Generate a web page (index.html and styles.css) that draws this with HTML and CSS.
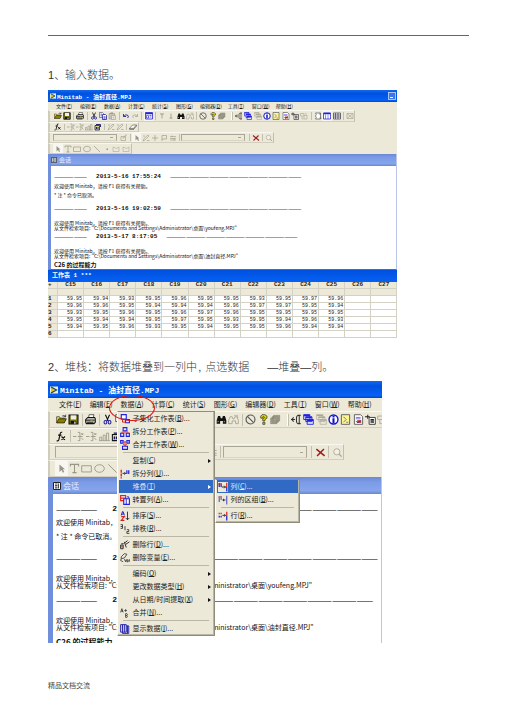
FILE: index.html
```html
<!DOCTYPE html>
<html lang="zh-CN">
<head>
<meta charset="utf-8">
<meta name="viewport" content="width=device-width, initial-scale=1">
<title>Minitab 数据堆叠</title>
<link rel="stylesheet" href="styles.css">
</head>
<body>
<svg class="sprite" aria-hidden="true">
  <symbol id="app" viewBox="0 0 16 16"><path d="M0 1h16v14H0z" fill="#e9f0c8"/><path d="M2 2l8 6-8 6z" fill="#f2c500"/><path d="M2 2l11 6-11 6" fill="none" stroke="#173a6b" stroke-width="2.4"/></symbol>
  <symbol id="log" viewBox="0 0 16 16"><path d="M1 1h14v14H1z" fill="#fff" stroke="#222" stroke-width="2"/><path d="M4 4h5M4 7h5M4 10h5M4 12h5M11 3v10" stroke="#222" stroke-width="1.6"/></symbol>
  <symbol id="open" viewBox="0 0 16 16"><path d="M1 13V4h4l1 2h6v2" fill="#ffe650" stroke="#222"/><path d="M1 13l3-6h11l-3 6z" fill="#8a8000" stroke="#111"/><path d="M9 3q3-2 5 1m0-3v3h-3" fill="none" stroke="#111"/></symbol>
  <symbol id="save" viewBox="0 0 16 16"><path d="M1.500 1.500h13v13h-13z" fill="#77760c" stroke="#111" stroke-width="1.600"/><path d="M4 2h8v6H4z" fill="#eee"/><path d="M4 10h8v4H4z" fill="#111"/><path d="M9 11h2v3H9z" fill="#ddd"/></symbol>
  <symbol id="print" viewBox="0 0 16 16"><path d="M5 6l1-5h7l-1 5" fill="#fff" stroke="#222"/><path d="M1 8l3-3h10l1 2v5l-2 2H2l-1-2z" fill="#bbb" stroke="#111" stroke-width="1.500"/><path d="M1 9h13M3 12h9" stroke="#111" stroke-width="1.300"/><path d="M8 10h3" stroke="#dc0" stroke-width="1.300"/></symbol>
  <symbol id="cut" viewBox="0 0 16 16"><path d="M5 1l4 9M11 1L7 10" stroke="#111" stroke-width="1.600"/><ellipse cx="5" cy="12" rx="2" ry="2.500" fill="none" stroke="#22a" stroke-width="1.600"/><ellipse cx="11" cy="12" rx="2" ry="2.500" fill="none" stroke="#22a" stroke-width="1.600"/></symbol>
  <symbol id="copy" viewBox="0 0 16 16"><path d="M1 1h6l2 2v8H1z" fill="#fff" stroke="#222"/><path d="M7 5h6l2 2v8H7z" fill="#fff" stroke="#119" stroke-width="1.500"/><path d="M3 4h3M3 6h3M3 8h3M9 9h4M9 11h4M9 13h4" stroke="#119"/></symbol>
  <symbol id="paste" viewBox="0 0 16 16"><path d="M2 3h11v11H2z" fill="#c9c6b4" stroke="#8e8b7b"/><path d="M5 1h5v3H5z" fill="#9a9787"/><path d="M7 7h8v8H7z" fill="#f4f2e8" stroke="#8e8b7b"/><path d="M9 10h4M9 12h4" stroke="#8e8b7b"/></symbol>
  <symbol id="undo" viewBox="0 0 16 16"><path d="M3 4v5h5M3 9q5-6 9-2 2 3-1 5" fill="none" stroke="#22a" stroke-width="1.800"/></symbol>
  <symbol id="redo" viewBox="0 0 16 16"><path d="M13 4v5H8M13 9Q8 3 4 7q-2 3 1 5" fill="none" stroke="#aaa797" stroke-width="1.600"/></symbol>
  <symbol id="dialog" viewBox="0 0 16 16"><path d="M1 1h14v13H1z" fill="#fff" stroke="#22c" stroke-width="1.600"/><path d="M1 3h14" stroke="#22c" stroke-width="3"/><path d="M3 7h4v5H3zM9 7h4M9 10h4" fill="none" stroke="#22c" stroke-width="1.300"/></symbol>
  <symbol id="up" viewBox="0 0 16 16"><path d="M8 3v10M4 4h8" stroke="#999687" stroke-width="1.600"/></symbol>
  <symbol id="down" viewBox="0 0 16 16"><path d="M8 3v10M5 12h6" stroke="#999687" stroke-width="1.600"/></symbol>
  <symbol id="find" viewBox="0 0 16 16"><path d="M3 3h3l1 3h2l1-3h3l2 6v5h-5v-4H6v4H1V9z" fill="#111"/><path d="M3 10v2M12 10v2" stroke="#eee"/></symbol>
  <symbol id="find2" viewBox="0 0 16 16"><path d="M3 4h3l1 3h2l1-3h3l2 5v5h-4v-4H6v4H1V9z" fill="none" stroke="#a8a595" stroke-width="1.300"/><path d="M9 2h5v4" fill="none" stroke="#a8a595"/></symbol>
  <symbol id="stop" viewBox="0 0 16 16"><circle cx="8" cy="8" r="6.500" fill="none" stroke="#555" stroke-width="1.600"/><path d="M3.500 3.500l9 9" stroke="#555" stroke-width="1.600"/></symbol>
  <symbol id="help" viewBox="0 0 16 16"><path d="M4 6V3l2-2h4l3 2v3l-3 2v2H7V7l3-2-1-1H7v2z" fill="#e8e000" stroke="#222"/><path d="M7 12h3v3H7z" fill="#e8e000" stroke="#222"/></symbol>
  <symbol id="cards" viewBox="0 0 16 16"><path d="M5 2h9v8H5zM3 4h9v8H3zM1 6h9v8H1z" fill="#aaa797" stroke="#838172"/></symbol>
  <symbol id="plug" viewBox="0 0 16 16"><path d="M0 8h6M4 5l-3 3 3 3M14 2h-4q-2 1-2 3v6q0 2 2 3h4M12 2v12" fill="none" stroke="#333" stroke-width="1.500"/></symbol>
  <symbol id="windows" viewBox="0 0 16 16"><path d="M1 1h9v7H1zM4 4h9v7H4zM6 8h9v7H6z" fill="#dfe3ff" stroke="#22d" stroke-width="1.300"/><path d="M1 2h9M4 5h9M6 9h9" stroke="#22d" stroke-width="2.200"/></symbol>
  <symbol id="windows2" viewBox="0 0 16 16"><path d="M1 1h9v7H1zM4 4h9v7H4zM6 8h9v7H6z" fill="#ece9d8" stroke="#aaa797"/><path d="M1 2h9M4 5h9M6 9h9" stroke="#aaa797" stroke-width="1.800"/></symbol>
  <symbol id="info" viewBox="0 0 16 16"><circle cx="8" cy="8" r="6.500" fill="#fff" stroke="#11c" stroke-width="2"/><path d="M8 3v2M8 6v7" stroke="#11c" stroke-width="3"/></symbol>
  <symbol id="note" viewBox="0 0 16 16"><path d="M2 1h12v14H2z" fill="#fdf790" stroke="#555" stroke-width="1.300"/><path d="M5 4l4 4-4 4M9 12h3" fill="none" stroke="#33a"/></symbol>
  <symbol id="report" viewBox="0 0 16 16"><path d="M2 1h9l3 3v11H2z" fill="#fff" stroke="#555" stroke-width="1.300"/><path d="M4 5h7M4 7h7" stroke="#44c"/><path d="M6 9h6v4H6z" fill="#c33"/><path d="M4 10l3 3 4-4" stroke="#228" fill="none"/></symbol>
  <symbol id="add" viewBox="0 0 16 16"><path d="M6 5h9v10H6z" fill="#fff" stroke="#333" stroke-width="1.300"/><path d="M0 4h7M4 1v6M8 8h5M8 10h5M8 12h5" stroke="#222" stroke-width="1.500"/></symbol>
  <symbol id="links" viewBox="0 0 16 16"><path d="M1 3h7v5H1zM8 7h6v7H8zM10 2l4 3M4 9v5h3" fill="none" stroke="#aaa797" stroke-width="1.300"/></symbol>
  <symbol id="scroll" viewBox="0 0 16 16"><path d="M3 2h10v12H3M3 2q3 3 0 6 3 3 0 6M10 4h3M11 12h4" fill="#fff" stroke="#555" stroke-width="1.400"/></symbol>
  <symbol id="sheet" viewBox="0 0 16 16"><path d="M1 2h14v12H1z" fill="#fff" stroke="#22d" stroke-width="1.500"/><path d="M1 3h14" stroke="#22d" stroke-width="3"/><path d="M5 5v9M10 5v9" stroke="#22d"/></symbol>
  <symbol id="grid" viewBox="0 0 16 16"><path d="M1 2h14v12H1zM1 6h14M1 10h14M5 2v12M10 2v12" fill="#fff" stroke="#445" stroke-width="1.500"/></symbol>
  <symbol id="net" viewBox="0 0 16 16"><path d="M2 3h12v10H2zM2 3l12 10M14 3L2 13" fill="none" stroke="#aaa797" stroke-width="1.400"/></symbol>
  <symbol id="fx" viewBox="0 0 16 16"><path d="M9 2Q6 1 6 5L4 13q-1 2-3 1M3 6h5M8 8l5 5M13 8l-5 5" fill="none" stroke="#111" stroke-width="1.700"/></symbol>
  <symbol id="node" viewBox="0 0 16 16"><path d="M0 8h5M7 2h3v12H7M12 3l3 3M15 3l-3 3M12 10l3 3M7 8h7" fill="none" stroke="#a09d8d" stroke-width="1.400"/></symbol>
  <symbol id="bars" viewBox="0 0 16 16"><path d="M1 14V9h3v5M6 14V6h3v8M11 14V3h3v11M0 14h16" fill="none" stroke="#a09d8d" stroke-width="1.300"/></symbol>
  <symbol id="robot" viewBox="0 0 16 16"><path d="M2 5h9v9H2z" fill="#dfd98a" stroke="#111" stroke-width="1.500"/><path d="M4 3h9v5M5 8v4M8 8v4" fill="none" stroke="#116" stroke-width="1.800"/></symbol>
  <symbol id="pen" viewBox="0 0 16 16"><path d="M2 14l2-5 8-7 2 2-8 8zM2 4h4M10 13h5" fill="none" stroke="#a09d8d" stroke-width="1.300"/></symbol>
  <symbol id="eraser" viewBox="0 0 16 16"><path d="M1 11l6-7h8l-6 7zM1 11v2h8l6-7V4M9 11v2" fill="#fff" stroke="#555" stroke-width="1.300"/></symbol>
  <symbol id="pointer" viewBox="0 0 16 16"><path d="M5 2v11l3-3 2 4 2-1-2-4h3z" fill="#999687"/></symbol>
  <symbol id="hand" viewBox="0 0 16 16"><path d="M2 5h9v8H2zM8 8l3-6h3M5 8h3" fill="none" stroke="#a09d8d" stroke-width="1.300"/></symbol>
  <symbol id="plus" viewBox="0 0 16 16"><path d="M8 2v12M2 8h12" stroke="#a09d8d" stroke-width="1.400"/></symbol>
  <symbol id="flag" viewBox="0 0 16 16"><path d="M4 14V3h9v7H4" fill="none" stroke="#a09d8d" stroke-width="1.400"/></symbol>
  <symbol id="lines" viewBox="0 0 16 16"><path d="M2 5h12M2 9h12M2 12h12M6 3v4M10 8v5" stroke="#a09d8d" stroke-width="1.300"/></symbol>
  <symbol id="cross" viewBox="0 0 16 16"><path d="M2 3l12 10M13 3L3 13" stroke="#9d1c1c" stroke-width="2.200"/></symbol>
  <symbol id="lens" viewBox="0 0 16 16"><circle cx="7" cy="7" r="4.500" fill="#f3f1e6" stroke="#aaa797" stroke-width="1.300"/><path d="M10 10l4 4" stroke="#aaa797" stroke-width="2"/></symbol>
  <symbol id="text" viewBox="0 0 16 16"><path d="M2 5V2h12v3M8 2v12M5 14h6" fill="none" stroke="#999687" stroke-width="1.500"/></symbol>
  <symbol id="rect" viewBox="0 0 16 16"><path d="M1 4h14v9H1z" fill="none" stroke="#999687" stroke-width="1.300"/></symbol>
  <symbol id="oval" viewBox="0 0 16 16"><ellipse cx="8" cy="8" rx="7" ry="5.500" fill="none" stroke="#999687" stroke-width="1.300"/></symbol>
  <symbol id="line" viewBox="0 0 16 16"><path d="M2 2l12 12" stroke="#999687" stroke-width="1.400"/></symbol>
  <symbol id="dot" viewBox="0 0 16 16"><path d="M7 7h3v3H7z" fill="#999687"/></symbol>
  <symbol id="poly" viewBox="0 0 16 16"><path d="M2 4v9h12V4l-5 3z" fill="none" stroke="#b0ad9d" stroke-width="1.300"/></symbol>
  <symbol id="m-subset" viewBox="0 0 16 16"><path d="M2 1h8v7H2z" fill="#fff" stroke="#22d" stroke-width="1.800"/><path d="M9 9h6v5H9z" fill="#fff" stroke="#22d" stroke-width="1.800"/><path d="M4 9v4h4" fill="none" stroke="#d22" stroke-width="1.600"/></symbol>
  <symbol id="m-split" viewBox="0 0 16 16"><path d="M5 1h6v5H5zM1 10h5v5H1zM10 10h5v5h-5z" fill="#dfe4ff" stroke="#22d" stroke-width="1.700"/><path d="M8 6v2M3 9V8h10v1" fill="none" stroke="#d22" stroke-width="1.500"/></symbol>
  <symbol id="m-merge" viewBox="0 0 16 16"><path d="M1 1h4v4H1zM11 1h4v4h-4zM4 10h8v5H4z" fill="#dfe4ff" stroke="#22d" stroke-width="1.700"/><path d="M6 3h4M8 3v6M5 7l3 2 3-2" fill="none" stroke="#d22" stroke-width="1.500"/></symbol>
  <symbol id="m-unstack" viewBox="0 0 16 16"><path d="M2 1v14" stroke="#d22" stroke-width="2.200" stroke-dasharray="5 1"/><path d="M4 7h5M7 5l2 2-2 2" fill="none" stroke="#222" stroke-width="1.400"/><path d="M11 2v6M14 2v6" stroke="#22d" stroke-width="2"/></symbol>
  <symbol id="m-transpose" viewBox="0 0 16 16"><path d="M1 1h8v8H1zM1 5h8" fill="#fff" stroke="#d22" stroke-width="1.800"/><path d="M6 6h9v9H6z" fill="#fff" stroke="#22d" stroke-width="1.800"/><path d="M10 6v9M11 3h3v2" fill="none" stroke="#22d" stroke-width="1.500"/></symbol>
  <symbol id="m-stack" viewBox="0 0 16 16"><path d="M2 2v6M5 2v6" stroke="#22d" stroke-width="2"/><path d="M6 8h6M10 6l2 2-2 2" fill="none" stroke="#222" stroke-width="1.500"/><path d="M1 3h3" stroke="#d22" stroke-width="3"/><path d="M14 1v7" stroke="#d22" stroke-width="2"/><path d="M14 8v7" stroke="#22d" stroke-width="2"/></symbol>
  <symbol id="m-blocks" viewBox="0 0 16 16"><path d="M2 2v9M5 2v6" stroke="#66b" stroke-width="2"/><path d="M7 8h5M9 6v4" stroke="#222" stroke-width="1.400"/><path d="M1 3h5" stroke="#c66" stroke-width="2"/><path d="M14 1v14" stroke="#55c" stroke-width="1.800"/></symbol>
  <symbol id="m-rows" viewBox="0 0 16 16"><path d="M1 4h5" stroke="#d22" stroke-width="2.500" stroke-dasharray="2 1"/><path d="M1 9h5" stroke="#22d" stroke-width="2.500" stroke-dasharray="2 1"/><path d="M7 7h5M10 5l2 2-2 2" fill="none" stroke="#222" stroke-width="1.400"/><path d="M14 1v7" stroke="#d22" stroke-width="2"/><path d="M14 8v7" stroke="#22d" stroke-width="2"/></symbol>
  <symbol id="m-sort" viewBox="0 0 16 16"><path d="M2 7l2-6h1l2 6M3 5h3" fill="none" stroke="#22c" stroke-width="1.600"/><path d="M2 9h5l-5 6h5" fill="none" stroke="#c22" stroke-width="1.700"/><path d="M12 1v13M9 11l3 3 3-3" fill="none" stroke="#222" stroke-width="1.400"/></symbol>
  <symbol id="m-rank" viewBox="0 0 16 16"><path d="M1 1h3v6H1M1 4h3M7 5l1-1v6M11 9h3v3h-3v3h4" fill="none" stroke="#333" stroke-width="1.400"/></symbol>
  <symbol id="m-delrow" viewBox="0 0 16 16"><path d="M1 8h4v6H1zM7 5l5-4M9 7l6-4M7 3l3 9M2 6h4" fill="none" stroke="#333" stroke-width="1.600"/><path d="M1 11h5" stroke="#944" stroke-width="1.500"/></symbol>
  <symbol id="m-erase" viewBox="0 0 16 16"><path d="M2 6l5-5 4 1-4 6-5 1zM2 9l-1 3 4 2M7 10l2 4 1-4M11 11h2v3h-2zM15 10v4" fill="none" stroke="#333" stroke-width="1.300"/></symbol>
  <symbol id="m-concat" viewBox="0 0 16 16"><path d="M1 7l2-6 2 6M2 5h3M7 4h4M9 2v4M9 9v6h2q2-1 0-3 2-2 0-3H9M9 12h2" fill="none" stroke="#333" stroke-width="1.300"/></symbol>
  <symbol id="m-show" viewBox="0 0 16 16"><path d="M1 1h9v12H1zM4 1v12M7 1v12M10 3h4v12H4v-2M12 3v12" fill="#dde" stroke="#22a" stroke-width="1.500"/></symbol>
</svg>

<main class="page">
  <hr class="rule">
  <h1 class="step"><span class="num">1</span>、输入数据。</h1>

  <section class="win small" aria-label="Minitab 主窗口">
    <header class="titlebar"><svg><use href="#app"/></svg><span>Minitab - 油封直径.MPJ</span><button class="min" aria-label="最小化"></button></header>
    <nav class="menubar">
      <div class="entry"><button>文件(<u>F</u>)</button></div><div class="entry"><button>编辑(<u>E</u>)</button></div><div class="entry"><button>数据(<u>A</u>)</button></div><div class="entry"><button>计算(<u>C</u>)</button></div><div class="entry"><button>统计(<u>S</u>)</button></div><div class="entry"><button>图形(<u>G</u>)</button></div><div class="entry"><button>编辑器(<u>D</u>)</button></div><div class="entry"><button>工具(<u>T</u>)</button></div><div class="entry"><button>窗口(<u>W</u>)</button></div><div class="entry"><button>帮助(<u>H</u>)</button></div>
    </nav>
    <div class="bar standard">
      <button aria-label="打开"><svg><use href="#open"/></svg></button><button aria-label="保存"><svg><use href="#save"/></svg></button><i></i><button aria-label="打印"><svg><use href="#print"/></svg></button><i></i><button aria-label="剪切"><svg><use href="#cut"/></svg></button><button aria-label="复制"><svg><use href="#copy"/></svg></button><button aria-label="粘贴"><svg><use href="#paste"/></svg></button><i></i><button aria-label="撤消"><svg><use href="#undo"/></svg></button><button aria-label="重做"><svg><use href="#redo"/></svg></button><i></i><button class="on" aria-label="编辑上一对话框"><svg><use href="#dialog"/></svg></button><i></i><button aria-label="上一命令"><svg><use href="#up"/></svg></button><button aria-label="下一命令"><svg><use href="#down"/></svg></button><button aria-label="查找"><svg><use href="#find"/></svg></button><button aria-label="查找下一个"><svg><use href="#find2"/></svg></button><i></i><button aria-label="取消"><svg><use href="#stop"/></svg></button><button aria-label="帮助"><svg><use href="#help"/></svg></button><button aria-label="指南"><svg><use href="#cards"/></svg></button><i class="wide"></i><button aria-label="会话窗口"><svg><use href="#plug"/></svg></button><button aria-label="工作表文件夹"><svg><use href="#windows"/></svg></button><button aria-label="图形文件夹"><svg><use href="#windows2"/></svg></button><button aria-label="信息"><svg><use href="#info"/></svg></button><button aria-label="历史"><svg><use href="#note"/></svg></button><button aria-label="报告"><svg><use href="#report"/></svg></button><button aria-label="追加"><svg><use href="#add"/></svg></button><button aria-label="相关文档"><svg><use href="#links"/></svg></button><i></i><button aria-label="会话"><svg><use href="#scroll"/></svg></button><button class="on" aria-label="数据窗口"><svg><use href="#sheet"/></svg></button><button aria-label="项目管理器"><svg><use href="#grid"/></svg></button><i></i><button aria-label="关闭图形"><svg><use href="#net"/></svg></button>
    </div>
    <div class="bar data">
      <button aria-label="公式"><svg><use href="#fx"/></svg></button><i></i><button aria-label="插入单元格"><svg><use href="#node"/></svg></button><button aria-label="插入行"><svg><use href="#node"/></svg></button><button aria-label="插入列"><svg><use href="#bars"/></svg></button><button aria-label="移动列"><svg><use href="#robot"/></svg></button><i></i><button aria-label="标记"><svg><use href="#pen"/></svg></button><button aria-label="取消标记"><svg><use href="#pen"/></svg></button><i></i><button aria-label="清除"><svg><use href="#eraser"/></svg></button>
    </div>
    <div class="bar graph">
      <select aria-label="图形元素"></select><button aria-label="编辑元素"><svg><use href="#hand"/></svg></button><i></i><button class="on" aria-label="选择"><svg><use href="#pointer"/></svg></button><button aria-label="刷亮"><svg><use href="#pen"/></svg></button><button aria-label="十字线"><svg><use href="#plus"/></svg></button><button aria-label="标志"><svg><use href="#flag"/></svg></button><button aria-label="参考线"><svg><use href="#lines"/></svg></button><i></i><select aria-label="列选择"></select><i></i><button aria-label="删除"><svg><use href="#cross"/></svg></button><i></i><button aria-label="缩放"><svg><use href="#lens"/></svg></button>
    </div>
    <div class="bar draw">
      <button class="on" aria-label="指针"><svg><use href="#pointer"/></svg></button><button aria-label="文本"><svg><use href="#text"/></svg></button><button aria-label="矩形"><svg><use href="#rect"/></svg></button><button aria-label="椭圆"><svg><use href="#oval"/></svg></button><button aria-label="直线"><svg><use href="#line"/></svg></button><button aria-label="点"><svg><use href="#dot"/></svg></button><button aria-label="多边形"><svg><use href="#poly"/></svg></button><button aria-label="折线"><svg><use href="#poly"/></svg></button>
    </div>
    <section class="session">
      <h2><svg><use href="#log"/></svg>会话</h2>
      <div class="log">
        <p class="stamp"><span>—————</span><b>2013-5-16 17:55:24</b><span>————————————————————</span></p>
        <p>欢迎使用 Minitab，请按 F1 获得有关帮助。</p>
        <p>* 注 * 命令已取消。</p>
        <p class="stamp far"><span>—————</span><b>2013-5-16 19:02:59</b><span>————————————————————</span></p>
        <p class="far">欢迎使用 Minitab，请按 F1 获得有关帮助。<br>从文件检索项目: "C:\Documents and Settings\Administrator\桌面\youfeng.MPJ"</p>
        <p class="stamp"><span>—————</span><b>2013-5-17 8:17:05</b><span>————————————————————</span></p>
        <p class="far">欢迎使用 Minitab，请按 F1 获得有关帮助。<br>从文件检索项目: "C:\Documents and Settings\Administrator\桌面\油封直径.MPJ"</p>
        <p class="result">C26 的过程能力</p>
      </div>
    </section>
    <section class="worksheet">
      <h2>工作表 1 ***</h2>
      <table>
        <thead>
          <tr><th class="row">+</th><th>C15</th><th>C16</th><th>C17</th><th>C18</th><th>C19</th><th>C20</th><th>C21</th><th>C22</th><th>C23</th><th>C24</th><th>C25</th><th>C26</th><th>C27</th></tr>
          <tr><th class="row"></th><th></th><th></th><th></th><th></th><th></th><th></th><th></th><th></th><th></th><th></th><th></th><th></th><th></th></tr>
        </thead>
        <tbody>
          <tr><th class="row">1</th><td>59.95</td><td>59.94</td><td>59.93</td><td>59.95</td><td>59.96</td><td>59.95</td><td>59.95</td><td>59.93</td><td>59.95</td><td>59.97</td><td>59.96</td><td></td><td></td></tr>
          <tr><th class="row">2</th><td>59.96</td><td>59.96</td><td>59.95</td><td>59.94</td><td>59.94</td><td>59.94</td><td>59.96</td><td>59.97</td><td>59.97</td><td>59.95</td><td>59.94</td><td></td><td></td></tr>
          <tr><th class="row">3</th><td>59.93</td><td>59.95</td><td>59.96</td><td>59.95</td><td>59.96</td><td>59.97</td><td>59.96</td><td>59.95</td><td>59.95</td><td>59.95</td><td>59.95</td><td></td><td></td></tr>
          <tr><th class="row">4</th><td>59.95</td><td>59.94</td><td>59.94</td><td>59.95</td><td>59.97</td><td>59.95</td><td>59.93</td><td>59.95</td><td>59.94</td><td>59.96</td><td>59.93</td><td></td><td></td></tr>
          <tr><th class="row">5</th><td>59.94</td><td>59.95</td><td>59.96</td><td>59.93</td><td>59.95</td><td>59.94</td><td>59.95</td><td>59.95</td><td>59.96</td><td>59.94</td><td>59.94</td><td></td><td></td></tr>
          <tr><th class="row">6</th><td></td><td></td><td></td><td></td><td></td><td></td><td></td><td></td><td></td><td></td><td></td><td></td><td></td></tr>
        </tbody>
      </table>
    </section>
  </section>

  <h1 class="step second"><span class="num">2</span>、堆栈：将数据堆叠到一列中<span class="comma">,</span>点选数据<span class="path">—堆叠—列。</span></h1>

  <section class="win large" aria-label="Minitab 数据菜单">
    <header class="titlebar"><svg><use href="#app"/></svg><span>Minitab - 油封直径.MPJ</span></header>
    <nav class="menubar">
      <div class="entry"><button>文件(<u>F</u>)</button></div><div class="entry"><button>编辑(<u>E</u>)</button></div>
      <div class="entry opened"><button>数据(<u>A</u>)</button>
        <div class="menu">
          <button><svg><use href="#m-subset"/></svg>子集化工作表(<u>B</u>)...</button>
          <button><svg><use href="#m-split"/></svg>拆分工作表(<u>P</u>)...</button>
          <button><svg><use href="#m-merge"/></svg>合并工作表(<u>W</u>)...</button>
          <hr>
          <button class="more"><svg></svg>复制(<u>C</u>)</button>
          <button><svg><use href="#m-unstack"/></svg>拆分列(<u>U</u>)...</button>
          <div class="parent">
            <button class="more picked"><svg></svg>堆叠(<u>T</u>)</button>
            <div class="menu sub">
              <button class="picked"><svg><use href="#m-stack"/></svg>列(<u>C</u>)...</button>
              <button><svg><use href="#m-blocks"/></svg>列的区组(<u>B</u>)...</button>
              <hr>
              <button><svg><use href="#m-rows"/></svg>行(<u>R</u>)...</button>
            </div>
          </div>
          <button><svg><use href="#m-transpose"/></svg>转置列(<u>A</u>)...</button>
          <hr>
          <button><svg><use href="#m-sort"/></svg>排序(<u>S</u>)...</button>
          <button><svg><use href="#m-rank"/></svg>排秩(<u>R</u>)...</button>
          <hr>
          <button><svg><use href="#m-delrow"/></svg>删除行(<u>D</u>)...</button>
          <button><svg><use href="#m-erase"/></svg>删除变量(<u>E</u>)...</button>
          <hr>
          <button class="more"><svg></svg>编码(<u>O</u>)</button>
          <button class="more"><svg></svg>更改数据类型(<u>H</u>)</button>
          <button class="more"><svg></svg>从日期/时间提取(<u>X</u>)</button>
          <button><svg><use href="#m-concat"/></svg>合并(<u>N</u>)...</button>
          <hr>
          <button><svg><use href="#m-show"/></svg>显示数据(<u>I</u>)...</button>
        </div>
        <span class="ring"></span>
      </div>
      <div class="entry"><button>计算(<u>C</u>)</button></div><div class="entry"><button>统计(<u>S</u>)</button></div><div class="entry"><button>图形(<u>G</u>)</button></div><div class="entry"><button>编辑器(<u>D</u>)</button></div><div class="entry"><button>工具(<u>T</u>)</button></div><div class="entry"><button>窗口(<u>W</u>)</button></div><div class="entry"><button>帮助(<u>H</u>)</button></div>
    </nav>
    <div class="bar standard">
      <button aria-label="打开"><svg><use href="#open"/></svg></button><button aria-label="保存"><svg><use href="#save"/></svg></button><i></i><button aria-label="打印"><svg><use href="#print"/></svg></button><i></i><button aria-label="剪切"><svg><use href="#cut"/></svg></button><button aria-label="复制"><svg><use href="#copy"/></svg></button><button aria-label="粘贴"><svg><use href="#paste"/></svg></button><i></i><button aria-label="撤消"><svg><use href="#undo"/></svg></button><button aria-label="重做"><svg><use href="#redo"/></svg></button><i></i><button class="on" aria-label="编辑上一对话框"><svg><use href="#dialog"/></svg></button><i></i><button aria-label="上一命令"><svg><use href="#up"/></svg></button><button aria-label="下一命令"><svg><use href="#down"/></svg></button><button aria-label="查找"><svg><use href="#find"/></svg></button><button aria-label="查找下一个"><svg><use href="#find2"/></svg></button><i></i><button aria-label="取消"><svg><use href="#stop"/></svg></button><button aria-label="帮助"><svg><use href="#help"/></svg></button><button aria-label="指南"><svg><use href="#cards"/></svg></button><i class="wide"></i><button aria-label="会话窗口"><svg><use href="#plug"/></svg></button><button aria-label="工作表文件夹"><svg><use href="#windows"/></svg></button><button aria-label="图形文件夹"><svg><use href="#windows2"/></svg></button><button aria-label="信息"><svg><use href="#info"/></svg></button><button aria-label="历史"><svg><use href="#note"/></svg></button><button aria-label="报告"><svg><use href="#report"/></svg></button><button aria-label="追加"><svg><use href="#add"/></svg></button><button aria-label="相关文档"><svg><use href="#links"/></svg></button><i></i><button aria-label="会话"><svg><use href="#scroll"/></svg></button><button class="on" aria-label="数据窗口"><svg><use href="#sheet"/></svg></button><button aria-label="项目管理器"><svg><use href="#grid"/></svg></button><i></i><button aria-label="关闭图形"><svg><use href="#net"/></svg></button>
    </div>
    <div class="bar data">
      <button aria-label="公式"><svg><use href="#fx"/></svg></button><i></i><button aria-label="插入单元格"><svg><use href="#node"/></svg></button><button aria-label="插入行"><svg><use href="#node"/></svg></button><button aria-label="插入列"><svg><use href="#bars"/></svg></button><button aria-label="移动列"><svg><use href="#robot"/></svg></button><i></i><button aria-label="标记"><svg><use href="#pen"/></svg></button><button aria-label="取消标记"><svg><use href="#pen"/></svg></button><i></i><button aria-label="清除"><svg><use href="#eraser"/></svg></button>
    </div>
    <div class="bar graph">
      <select aria-label="图形元素"></select><button aria-label="编辑元素"><svg><use href="#hand"/></svg></button><i></i><button class="on" aria-label="选择"><svg><use href="#pointer"/></svg></button><button aria-label="刷亮"><svg><use href="#pen"/></svg></button><button aria-label="十字线"><svg><use href="#plus"/></svg></button><button aria-label="标志"><svg><use href="#flag"/></svg></button><button aria-label="参考线"><svg><use href="#lines"/></svg></button><i></i><select aria-label="列选择"></select><i></i><button aria-label="删除"><svg><use href="#cross"/></svg></button><i></i><button aria-label="缩放"><svg><use href="#lens"/></svg></button>
    </div>
    <div class="bar draw">
      <button class="on" aria-label="指针"><svg><use href="#pointer"/></svg></button><button aria-label="文本"><svg><use href="#text"/></svg></button><button aria-label="矩形"><svg><use href="#rect"/></svg></button><button aria-label="椭圆"><svg><use href="#oval"/></svg></button><button aria-label="直线"><svg><use href="#line"/></svg></button><button aria-label="点"><svg><use href="#dot"/></svg></button><button aria-label="多边形"><svg><use href="#poly"/></svg></button><button aria-label="折线"><svg><use href="#poly"/></svg></button>
    </div>
    <section class="session">
      <h2><svg><use href="#log"/></svg>会话</h2>
      <div class="log">
        <p class="stamp"><span>—————</span><b>2013-5-16 17:55:24</b><span>————————————————————</span></p>
        <p>欢迎使用 Minitab，请按 F1 获得有关帮助。</p>
        <p>* 注 * 命令已取消。</p>
        <p class="stamp far"><span>—————</span><b>2013-5-16 19:02:59</b><span>————————————————————</span></p>
        <p class="far">欢迎使用 Minitab，请按 F1 获得有关帮助。<br>从文件检索项目: "C:\Documents and Settings\Administrator\桌面\youfeng.MPJ"</p>
        <p class="stamp"><span>—————</span><b>2013-5-17 8:17:05</b><span>————————————————————</span></p>
        <p class="far">欢迎使用 Minitab，请按 F1 获得有关帮助。<br>从文件检索项目: "C:\Documents and Settings\Administrator\桌面\油封直径.MPJ"</p>
        <p class="result">C26 的过程能力</p>
      </div>
    </section>
  </section>

  <footer class="foot">精品文档交流</footer>
</main>
</body>
</html>
```
FILE: styles.css
```css
* { box-sizing: border-box; }
body { margin: 0; background: #fff; color: #222; font-family: "Liberation Sans", "Noto Sans CJK SC", sans-serif; }
button { margin: 0; padding: 0; border: 0; background: none; color: inherit; font: inherit; line-height: inherit; white-space: nowrap; }
h1, h2, p { margin: 0; font-weight: normal; }
.sprite { display: none; }

.page { padding: 35px 36px 0 48px; }
.rule { height: 1px; margin: 0 0 31px; border: 0; background: #666; }
.step { margin-bottom: 7px; color: #333; font-size: 11px; line-height: 16px; font-weight: 300; white-space: nowrap; }
.step.second { margin: 21px 0 6px; }
.num { font-weight: 400; }
.comma { padding: 0 4px 0 1px; }
.path { padding-left: 18px; }
.foot { margin-top: 38px; color: #444; font-size: 7px; line-height: 10px; }

/* One window layout, drawn at two scales */
.win { background: #ece9d8; font-family: "Noto Sans CJK SC", sans-serif; font-size: var(--text); overflow: hidden; }
.small {
  --text: 5px; --title: 6px; --title-h: 12px; --menu-h: 8px; --menu-pad: 3px; --icon: 8px;
  --bar-h: 12px; --row-h: 10px; --sep: 4px; --select: 64px; --edge: 3px; --line: 5px; --near: 4px; --far: 9px;
  --top: 8px; --label: 6px; --dash: 8px; --date-gap: 9px; --button: 9px; --bar-pad: 3px; --title-gap: 1px;
  width: 83%;
}
.large {
  --text: 7px; --title: 8px; --title-h: 17px; --menu-h: 13px; --menu-pad: 4px; --icon: 11px;
  --bar-h: 17px; --row-h: 16px; --sep: 5px; --select: 84px; --edge: 5px; --line: 7px; --near: 7px; --far: 14px;
  --top: 11px; --label: 8px; --dash: 10px; --date-gap: 15px; --button: 12px; --bar-pad: 5px; --title-gap: 2px;
  width: 79%;
  min-width: 334px;
}
.titlebar { display: flex; align-items: center; gap: var(--title-gap); height: var(--title-h); padding: 0 1px 0 2px; color: #fff; background: linear-gradient(#1268ec, #0050e0 30%, #0661f5 85%, #0046c4); font: bold var(--title) "Liberation Mono", "Noto Sans CJK SC", monospace; }
.titlebar svg { width: var(--title); height: var(--title); }
.min { width: 8px; height: 8px; margin-left: auto; border: 1px solid #a8c4fa; background: linear-gradient(#fff, #fff) 1px 4px / 3px 1px no-repeat #3b76ea; }

.menubar { display: flex; height: var(--menu-h); padding-left: 5px; line-height: var(--menu-h); }
.entry { position: relative; }
.entry > button { display: block; height: 100%; padding: 0 var(--menu-pad); }
.small .entry { min-width: 24px; }
.large .menubar { padding-left: 7px; }
u { text-decoration-thickness: 1px; text-underline-offset: 0; }

.bar { display: flex; align-items: center; height: var(--row-h); padding-left: var(--bar-pad); border: 1px solid #f8f7f0; border-right-color: #c2bfae; border-bottom-color: #d2cfbe; border-left: 2px solid #cfccbb; }
.bar button { display: flex; align-items: center; justify-content: center; flex: 1 1 0; min-width: 0; height: 100%; }
.bar svg { width: var(--icon); height: var(--icon); flex: none; }
.bar i { flex: none; width: 1px; height: 80%; margin: 0 calc((var(--sep) - 1px) / 2); background: #c2bfae; }
.bar i.wide { margin-left: var(--sep); border-left: 1px solid #fff; width: 2px; }
.bar .on { background: #f7f6f0; }
.bar select { flex: none; width: var(--select); height: 80%; margin-right: 2px; padding: 0; appearance: none; border: 1px solid #aaa797; border-bottom-color: #d8d5c5; background: linear-gradient(45deg, #aaa797, #aaa797) calc(100% - 3px) 50% / 3px 1px no-repeat #ece9d8; }
.standard { height: var(--bar-h); }
.small .standard { width: 88%; }
.large .standard { width: 120%; }
.small .data { width: 26%; }
.large .data { width: 37%; }
.graph { width: fit-content; }
.graph button { flex: none; width: var(--button); }
.small .graph, .small .draw { height: 11px; }
.small .draw { width: 24%; }
.large .draw { width: 33%; height: 17px; }

.session { border: 1px solid #b9c6e8; border-width: 0 1px 0 0; border-left: var(--edge) solid #6f8fdc; background: #fff; }
.session h2 { display: flex; align-items: center; gap: 2px; height: var(--title-h); color: #e8eefc; background: linear-gradient(#6c88d4, #7c9be6 30%, #85a5ec 80%, #6b87cf); font-size: var(--label); line-height: 1; }
.session h2 svg { width: var(--label); height: var(--label); }
.small .session { border-bottom: 1px solid #2f6fe0; }
.log { padding: var(--top) 0 1px 3px; color: #111; line-height: var(--line); white-space: nowrap; overflow: hidden; }
.small .log { min-height: 103px; }
.large .log { max-height: 149px; }
.log p { margin-top: var(--near); }
.log p:first-child { margin-top: 0; }
.log .far { margin-top: var(--far); }
.stamp { display: flex; gap: var(--date-gap); height: var(--line); font-size: var(--label); }
.stamp span { color: #555; font-size: var(--dash); }
.stamp b { font-family: "Liberation Mono", monospace; }
.log .result { font-weight: bold; font-size: var(--title); }

.worksheet { background: #fff; }
.worksheet h2 { height: 12px; padding-left: 4px; color: #fff; background: linear-gradient(#0050dc, #0661f5); font: bold 6px/11px "Liberation Mono", "Noto Sans CJK SC", monospace; }
table { width: 100%; table-layout: fixed; border-collapse: separate; border-spacing: 0; font: 5px/6px "Liberation Mono", monospace; }
th, td { height: 7px; padding: 0; border-right: 1px solid #d4d1c5; border-bottom: 1px solid #d4d1c5; }
th { background: #ece9d8; font-size: 6px; font-weight: bold; text-align: center; }
td { padding-right: 1px; text-align: right; }
.row { width: 10px; text-align: left; }

/* Menus that open over the window */
.opened { z-index: 2; }
.menu { position: absolute; top: 100%; left: 0; width: 98px; padding: 0 1px; border: 1px solid #8f8c7c; border-left-color: #fff; background: #ece9d8; box-shadow: inset -1px -1px #b9b6a6; line-height: 13px; }
.menu button { display: flex; align-items: center; width: 100%; height: 13px; text-align: left; }
.menu svg { flex: none; width: 10px; height: 10px; margin: 0 3px 0 1px; }
.menu hr { height: 1px; margin: 1px 4px; border: 0; background: #bab7a7; }
.menu .picked { color: #dfe8fa; background: #316ac5; }
.more::after { content: ""; margin: 0 2px 0 auto; border: 2px solid transparent; border-left: 3px solid #111; border-right: 0; }
.picked.more::after { border-left-color: #fff; }
.parent { position: relative; }
.menu .sub { top: -1px; left: 96px; width: 85px; }
.sub .picked svg { background: #ece9d8; }
.ring { position: absolute; top: -3px; left: -8px; width: 46px; height: 26px; border: 1px solid #e01010; border-radius: 50%; pointer-events: none; }
```
